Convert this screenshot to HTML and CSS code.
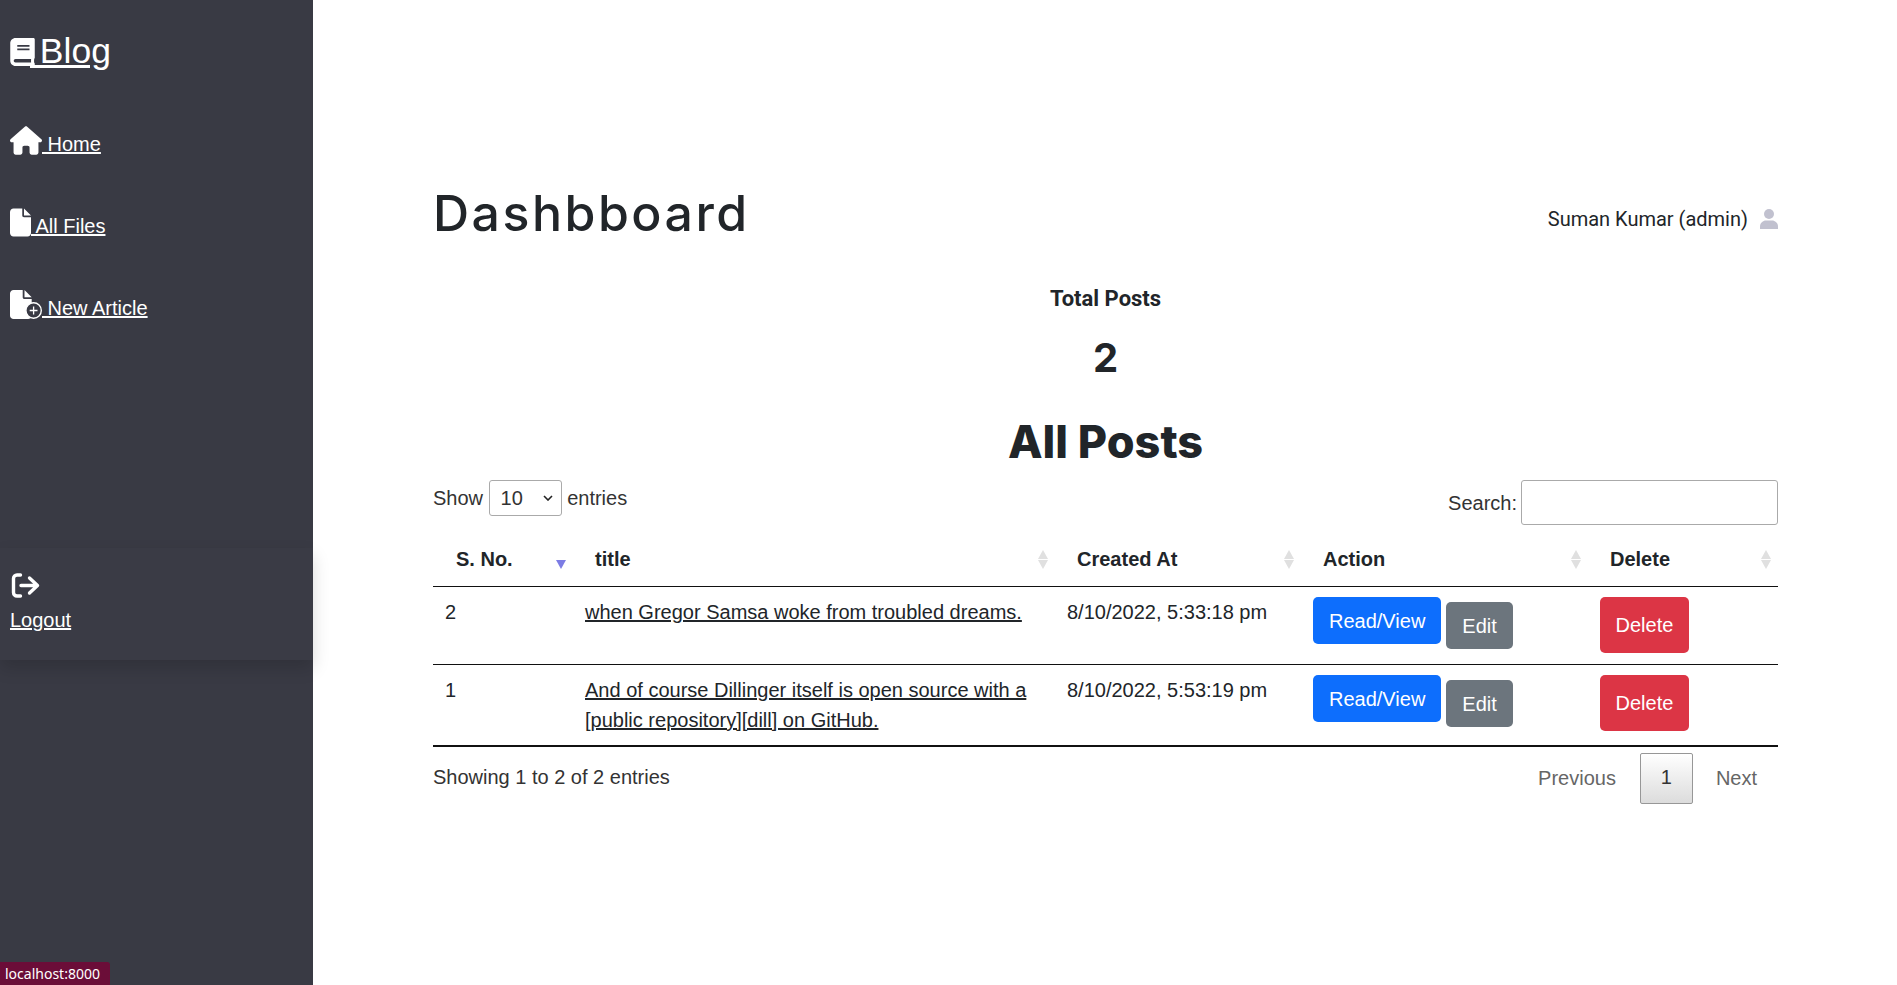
FILE: index.html
```html
<!DOCTYPE html>
<html lang="en">
<head>
    <meta charset="UTF-8">
    <meta name="viewport" content="width=device-width, initial-scale=1.0">
    <title>Blog Dashboard</title>
    <link rel="stylesheet" href="styles.css">
</head>
<body>
    <aside class="sidebar">
        <a class="brand" href="#">
            <svg class="icon-book" viewBox="0 0 448 512"><path d="M448 360V24c0-13.3-10.7-24-24-24H96C43 0 0 43 0 96v320c0 53 43 96 96 96h328c13.3 0 24-10.7 24-24v-16c0-7.5-3.5-14.3-8.9-18.7-4.2-15.4-4.2-59.3 0-74.7 5.4-4.3 8.9-11.1 8.9-18.6zM128 134c0-3.3 2.7-6 6-6h212c3.3 0 6 2.7 6 6v20c0 3.3-2.7 6-6 6H134c-3.3 0-6-2.7-6-6v-20zm0 64c0-3.3 2.7-6 6-6h212c3.3 0 6 2.7 6 6v20c0 3.3-2.7 6-6 6H134c-3.3 0-6-2.7-6-6v-20zm253.4 250H96c-17.7 0-32-14.3-32-32 0-17.6 14.4-32 32-32h285.4c-1.9 17.1-1.9 46.9 0 64z"/></svg> Blog</a>
        <nav class="side-nav">
            <a href="#"><svg class="icon-home" viewBox="0 0 576 512"><path d="M575.8 255.5c0 18-15 32.1-32 32.1h-32l.7 160.2c0 2.7-.2 5.4-.5 8.1V472c0 22.1-17.9 40-40 40H456c-1.1 0-2.2 0-3.3-.1c-1.4 .1-2.8 .1-4.2 .1H416 392c-22.1 0-40-17.9-40-40V448 384c0-17.7-14.3-32-32-32H256c-17.7 0-32 14.3-32 32v64 24c0 22.1-17.9 40-40 40H160 128.1c-1.5 0-3-.1-4.5-.2c-1.2 .1-2.4 .2-3.6 .2H104c-22.1 0-40-17.9-40-40V360c0-.9 0-1.9 .1-2.8V287.6H32c-18 0-32-14-32-32.1c0-9 3-17 10-24L266.4 8c7-7 15-8 22-8s15 2 21 7L564.8 231.5c8 7 12 15 11 24z"/></svg> Home</a>
            <a href="#"><svg class="icon-file" viewBox="0 0 384 512"><path d="M0 64C0 28.7 28.7 0 64 0H224V128c0 17.7 14.3 32 32 32H384V448c0 35.3-28.7 64-64 64H64c-35.3 0-64-28.7-64-64V64zm384 64H256V0L384 128z"/></svg> All Files</a>
            <a href="#"><svg class="icon-newfile" viewBox="0 0 32 29"><path d="M0 3.600C0 1.600 1.600 0 3.600 0h9.100v7.200c0 1 .8 1.800 1.800 1.800h7.200v16.400c0 2-1.600 3.600-3.600 3.600H3.600c-2 0-3.600-1.600-3.600-3.600V3.600zm21.700 3.600h-7.200V0l7.200 7.200z"/><circle cx="23.600" cy="20.500" r="7.700" fill="#393a44" stroke="#fff" stroke-width="1.400"/><path d="M23.600 16.600v7.800M19.700 20.500h7.800" stroke="#fff" stroke-width="1.300" fill="none"/></svg> New Article</a>
        </nav>
        <div class="logout-box">
            <svg class="icon-logout" viewBox="0 0 29 25"><path d="M9 2H5.500C3.500 2 2 3.500 2 5.500v14C2 21.500 3.500 23 5.500 23H9" fill="none" stroke="#fff" stroke-width="3.400" stroke-linecap="round"/><path d="M9.500 12.500h16M18 5l8 7.500-8 7.500" fill="none" stroke="#fff" stroke-width="3.400" stroke-linecap="round" stroke-linejoin="round"/></svg>
            <a href="#">Logout</a>
        </div>
    </aside>

    <main class="content">
        <header class="top-bar">
            <h1>Dashbboard</h1>
            <div class="user-info">
                <span>Suman Kumar (admin)</span>
                <svg class="icon-user" viewBox="0 0 18 20"><circle cx="9" cy="5" r="5"/><path d="M0 20v-2.500C0 14 3 11.500 6 11.500h6c3 0 6 2.500 6 6V20z"/></svg>
            </div>
        </header>

        <section class="stats">
            <h5>Total Posts</h5>
            <h3>2</h3>
            <h2>All Posts</h2>
        </section>

        <div class="table-controls">
            <label class="length">Show
                <select><option>10</option><option>25</option><option>50</option></select>
                entries</label>
            <label class="search">Search: <input type="text"></label>
        </div>

        <table class="posts">
            <colgroup>
                <col class="c-num"><col class="c-title"><col class="c-date"><col class="c-action"><col class="c-delete">
            </colgroup>
            <thead>
                <tr>
                    <th class="sort-active">S. No.</th>
                    <th class="sort">title</th>
                    <th class="sort">Created At</th>
                    <th class="sort">Action</th>
                    <th class="sort">Delete</th>
                </tr>
            </thead>
            <tbody>
                <tr>
                    <td>2</td>
                    <td><a href="#">when Gregor Samsa woke from troubled dreams.</a></td>
                    <td>8/10/2022, 5:33:18 pm</td>
                    <td><div class="actions"><a class="btn btn-blue" href="#">Read/View</a><a class="btn btn-grey" href="#">Edit</a></div></td>
                    <td><button class="btn btn-red">Delete</button></td>
                </tr>
                <tr>
                    <td>1</td>
                    <td><a href="#">And of course Dillinger itself is open source with a [public repository][dill] on GitHub.</a></td>
                    <td>8/10/2022, 5:53:19 pm</td>
                    <td><div class="actions"><a class="btn btn-blue" href="#">Read/View</a><a class="btn btn-grey" href="#">Edit</a></div></td>
                    <td><button class="btn btn-red">Delete</button></td>
                </tr>
            </tbody>
        </table>

        <div class="table-footer">
            <div class="info">Showing 1 to 2 of 2 entries</div>
            <div class="paging">
                <a href="#">Previous</a>
                <a class="current" href="#">1</a>
                <a href="#">Next</a>
            </div>
        </div>
    </main>

    <div class="status-bubble">localhost:8000</div>
</body>
</html>
```

FILE: styles.css
```css
* {
    box-sizing: border-box;
}

html, body {
    height: 100%;
}

body {
    margin: 0;
    display: flex;
    font-family: "Liberation Sans", Arial, sans-serif;
    font-size: 20px;
    line-height: 1.5;
    color: #212529;
    background: #fff;
    overflow: hidden;
}

/* sidebar */
.sidebar {
    width: 313px;
    flex-shrink: 0;
    height: 985px;
    padding-top: 27px;
    background-color: #393a44;
    color: #fff;
}
.sidebar a {
    color: #fff;
}
.sidebar svg {
    fill: #fff;
}
.brand {
    display: inline-block;
    margin-left: 10px;
    font-size: 35.5px;
    line-height: 48px;
}
.side-nav {
    display: flex;
    flex-direction: column;
    align-items: flex-start;
    gap: 49px;
    margin-top: 51px;
    padding-left: 10px;
}
.side-nav a {
    line-height: 30px;
}
.icon-book {
    width: 25px;
    height: 28px;
    margin-right: -5px;
    vertical-align: -3px;
}
.icon-home {
    width: 32px;
    height: 29px;
    vertical-align: -4px;
}
.icon-file {
    width: 21px;
    height: 29px;
    vertical-align: -4px;
}
.icon-newfile {
    width: 32px;
    height: 29px;
    vertical-align: -4px;
}
.logout-box {
    display: flex;
    flex-direction: column;
    align-items: flex-start;
    height: 112px;
    margin-top: 225px;
    padding: 25px 0 0 10px;
    background-color: #3a3b45;
    box-shadow: 0 8px 16px rgba(0, 0, 0, 0.15);
    gap: 7px;
}
.icon-logout {
    width: 30px;
    height: 25px;
    margin-left: 1px;
}

/* main area */
.content {
    flex: 1;
    padding: 0 119px 0 120px;
}
.top-bar {
    display: flex;
    justify-content: space-between;
    align-items: center;
    padding-top: 178px;
}
h1 {
    margin: 0;
    font-family: Inter, "Open Sans", sans-serif;
    font-size: 50px;
    font-weight: 500;
    letter-spacing: 2.5px;
    line-height: 70px;
}
.user-info {
    display: flex;
    align-items: center;
    gap: 12px;
    margin-top: 12px;
    font-family: Roboto, sans-serif;
}
.icon-user {
    width: 18px;
    height: 20px;
    fill: #c1c1cf;
}
.stats {
    text-align: center;
}
.stats h5 {
    margin: 0;
    padding-top: 36px;
    font-family: Roboto, sans-serif;
    font-size: 22px;
    font-weight: 700;
    line-height: 30px;
}
.stats h3 {
    margin: 14px 0 0;
    font-family: Inter, sans-serif;
    font-size: 40px;
    font-weight: 700;
    line-height: 60px;
}
.stats h2 {
    margin: 21px 0 0;
    font-family: Inter, sans-serif;
    font-size: 45px;
    font-weight: 800;
    line-height: 66px;
}

/* datatable bits */
.table-controls {
    display: flex;
    justify-content: space-between;
    align-items: flex-start;
    margin-top: 5px;
    color: #333;
}
.length select {
    appearance: none;
    width: 73px;
    height: 36px;
    margin: 0;
    padding: 0 0 0 11px;
    border: 1px solid #aaa;
    border-radius: 3px;
    background: #fff url("data:image/svg+xml,%3Csvg xmlns='http://www.w3.org/2000/svg' viewBox='0 0 10 6'%3E%3Cpath d='M1 1l4 4 4-4' fill='none' stroke='%23222' stroke-width='1.600'/%3E%3C/svg%3E") no-repeat right 8px center / 10px 6px;
    font: inherit;
    color: #333;
}
.search {
    display: flex;
    align-items: center;
    gap: 4px;
}
.search input {
    width: 257px;
    height: 45px;
    border: 1px solid #aaa;
    border-radius: 3px;
}
.posts {
    width: 100%;
    margin-top: 6px;
    border-collapse: separate;
    border-spacing: 0;
    table-layout: fixed;
    border-bottom: 2px solid #111;
}
.c-num { width: 142px; }
.c-title { width: 482px; }
.c-date { width: 246px; }
.c-action { width: 287px; }
.c-delete { width: 188px; }
.posts th {
    position: relative;
    height: 56px;
    padding: 10px 20px;
    border-bottom: 1px solid #111;
    text-align: left;
    font-weight: 700;
}
.posts th:first-child {
    padding-left: 23px;
}
.posts td {
    padding: 10px;
    vertical-align: top;
}
.posts td:first-child {
    padding-left: 12px;
}
.posts tbody tr:first-child td {
    height: 78px;
    border-bottom: 1px solid #111;
}
.posts a {
    color: #212529;
}
.sort::before,
.sort::after,
.sort-active::after {
    content: "";
    position: absolute;
    right: 9px;
    border-left: 5px solid transparent;
    border-right: 5px solid transparent;
}
.sort::before {
    top: 19px;
    border-bottom: 9px solid #e0e0e0;
}
.sort::after {
    top: 29px;
    border-top: 9px solid #e0e0e0;
}
.sort-active::after {
    top: 29px;
    border-top: 9px solid #7c7ce4;
}
.posts th:last-child::before,
.posts th:last-child::after {
    right: 7px;
}
.actions {
    display: flex;
    align-items: flex-start;
    gap: 5px;
}
.btn {
    display: inline-block;
    padding: 7.5px 15px;
    border: 1px solid transparent;
    border-radius: 5px;
    font-family: inherit;
    font-size: 20px;
    line-height: 30px;
    color: #fff !important;
    text-decoration: none;
}
.btn-blue {
    background-color: #0d6efd;
}
.btn-grey {
    margin-top: 5px;
    background-color: #6c757d;
}
.btn-red {
    display: block;
    padding: 12px 14.5px;
    background-color: #dc3545;
}

.table-footer {
    display: flex;
    justify-content: space-between;
    color: #333;
}
.info {
    padding-top: 15px;
}
.paging {
    display: flex;
    align-items: center;
    padding-top: 6px;
}
.paging a {
    margin-top: -2px;
    padding: 0 24px 0 23px;
    color: #666;
    text-decoration: none;
}
.paging a:last-child {
    padding: 0 21px 0 23px;
}
.paging .current {
    width: 53px;
    height: 51px;
    margin-top: 0;
    padding: 0;
    border: 1px solid #979797;
    border-radius: 2px;
    background: linear-gradient(to bottom, #fff 0%, #dcdcdc 100%);
    color: #333;
    text-align: center;
    line-height: 47px;
}

/* browser link preview */
.status-bubble {
    position: fixed;
    left: 0;
    bottom: 0;
    width: 110px;
    height: 23px;
    padding-left: 5px;
    border-top-right-radius: 3px;
    background-color: #6b0d38;
    color: #fff;
    font-family: "Noto Sans", sans-serif;
    font-size: 14px;
    line-height: 23px;
    white-space: nowrap;
}
```
